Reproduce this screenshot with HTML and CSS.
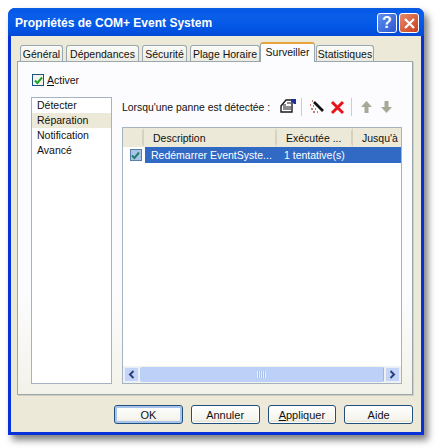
FILE: index.html
```html
<!DOCTYPE html>
<html lang="fr">
<head>
    <meta charset="UTF-8">
    <title>Propriétés de COM+ Event System</title>
    <link rel="stylesheet" href="styles.css">
</head>
<body>
    <div class="window">
        <div class="titlebar">
            <div class="title">Propriétés de COM+ Event System</div>
            <div class="tb-btn help">?</div>
            <div class="tb-btn close">
                <svg width="13" height="13" viewBox="0 0 13 13"><path d="M2 2l9 9M11 2l-9 9" stroke="#fff" stroke-width="2.200" fill="none"/></svg>
            </div>
        </div>
        <div class="body">
            <div class="tabs">
                <div class="tab t1">Général</div>
                <div class="tab t2">Dépendances</div>
                <div class="tab t3">Sécurité</div>
                <div class="tab t4">Plage Horaire</div>
                <div class="tab active t5">Surveiller</div>
                <div class="tab t6">Statistiques</div>
            </div>
            <div class="panel">
                <div class="enable">
                    <div class="check">
                        <svg width="9" height="9" viewBox="0 0 9 9"><path d="M1 4.500l2.400 2.600L8 1.500" stroke="#21a121" stroke-width="2" fill="none"/></svg>
                    </div>
                    <span><u>A</u>ctiver</span>
                </div>
                <div class="columns">
                    <div class="side">
                        <div class="side-item">Détecter</div>
                        <div class="side-item current">Réparation</div>
                        <div class="side-item">Notification</div>
                        <div class="side-item">Avancé</div>
                    </div>
                    <div class="main">
                        <div class="toolbar">
                            <span class="tool-label">Lorsqu'une panne est détectée :</span>
                            <svg class="ico i-props" width="17" height="16" viewBox="0 0 17 16">
                                <path d="M1 8l5-6h6v12H1z" fill="#fff" stroke="#1a1a1a" stroke-width="1.400"/>
                                <path d="M3 7h3M7 5h4M3 9h8M3 11h8" stroke="#1a1a1a" stroke-width="1.200"/>
                                <path d="M11 1h5v5h-2l-3-3z" fill="#1c2f9f"/>
                            </svg>
                            <div class="sep"></div>
                            <svg class="ico i-wand" width="15" height="15" viewBox="0 0 15 15">
                                <path d="M5 2l9 9" stroke="#111" stroke-width="2.600"/>
                                <path d="M3 1h1M1 5h1M4 6h1M2 9h2M6 9h1M4 12h2M8 12h1" stroke="#b5523a" stroke-width="1.400"/>
                            </svg>
                            <svg class="ico i-del" width="15" height="15" viewBox="0 0 15 15">
                                <path d="M2 2l11 11M13 2L2 13" stroke="#e8141c" stroke-width="3"/>
                            </svg>
                            <div class="sep sep2"></div>
                            <svg class="ico i-up" width="13" height="14" viewBox="0 0 13 14">
                                <path d="M6.500 1L12 7H8.500v6h-4V7H1z" fill="#a8a896"/>
                            </svg>
                            <svg class="ico i-down" width="13" height="14" viewBox="0 0 13 14">
                                <path d="M6.500 13L12 7H8.500V1h-4v6H1z" fill="#a8a896"/>
                            </svg>
                        </div>
                        <div class="list">
                            <div class="head">
                                <div class="hcell c0"></div>
                                <div class="hcell c1">Description</div>
                                <div class="hcell c2">Exécutée ...</div>
                                <div class="hcell c3">Jusqu'à</div>
                            </div>
                            <div class="row">
                                <div class="row-check">
                                    <div class="check small">
                                        <svg width="9" height="9" viewBox="0 0 9 9"><path d="M1 4.500l2.400 2.600L8 1.500" stroke="#1f7f6a" stroke-width="2" fill="none"/></svg>
                                    </div>
                                </div>
                                <div class="row-sel">
                                    <div class="cell cell-name">Redémarrer EventSyste...</div>
                                    <div class="cell">1 tentative(s)</div>
                                </div>
                            </div>
                            <div class="list-fill"></div>
                            <div class="hscroll">
                                <div class="sb-btn">
                                    <svg width="7" height="9" viewBox="0 0 7 9"><path d="M5.500 1L2 4.500 5.500 8" stroke="#2c3f78" stroke-width="2" fill="none"/></svg>
                                </div>
                                <div class="sb-thumb">
                                    <div class="grip"></div>
                                </div>
                                <div class="sb-btn">
                                    <svg width="7" height="9" viewBox="0 0 7 9"><path d="M1.500 1L5 4.500 1.500 8" stroke="#2c3f78" stroke-width="2" fill="none"/></svg>
                                </div>
                            </div>
                        </div>
                    </div>
                </div>
            </div>
            <div class="buttons">
                <div class="btn default">OK</div>
                <div class="btn">Annuler</div>
                <div class="btn"><span><u>A</u>ppliquer</span></div>
                <div class="btn">Aide</div>
            </div>
        </div>
    </div>
</body>
</html>
```

FILE: styles.css
```css
* {
    box-sizing: border-box;
}
body {
    margin: 0;
    height: 448px;
    padding: 8px 13px 13px 8px;
    background-color: white;
    font-family: "Liberation Sans", sans-serif;
    font-size: 10.500px;
    color: #111;
    overflow: hidden;
}
.window {
    width: 416px;
    height: 427px;
    display: flex;
    flex-direction: column;
    background-color: #0831d9;
    border-radius: 7px 7px 0 0;
    box-shadow: 4px 5px 7px rgba(0, 0, 0, 0.5);
}
.titlebar {
    height: 28px;
    flex: none;
    display: flex;
    align-items: center;
    padding: 2px 5px 0 7px;
    border-radius: 7px 7px 0 0;
    background: linear-gradient(#0a5fe0 0, #0558e8 3px, #0a5fe8 8px, #0355e5 20px, #0349d6 100%);
}
.title {
    flex: 1;
    color: white;
    font-size: 12px;
    font-weight: bold;
    white-space: nowrap;
}
.tb-btn {
    width: 20px;
    height: 20px;
    margin-left: 2px;
    display: flex;
    justify-content: center;
    align-items: center;
    border: 1px solid white;
    border-radius: 3px;
    color: white;
    font-size: 16px;
    font-weight: bold;
}
.help {
    background: linear-gradient(135deg, #5f8ff0, #2a58d0);
}
.close {
    background: linear-gradient(135deg, #e88a6c, #c8401c);
}
.body {
    flex: 1;
    margin: 0 3px 3px 3px;
    padding: 8px 8px 0 6px;
    background-color: #ece9d8;
}
.tabs {
    height: 17px;
    display: flex;
    align-items: flex-end;
    padding-left: 3px;
}
.tab {
    height: 16px;
    margin-right: 3px;
    display: flex;
    justify-content: center;
    align-items: center;
    white-space: nowrap;
    background: linear-gradient(#fbfbf8, #ecebe0);
    border: 1px solid #9aa7ae;
    border-bottom: none;
    border-radius: 3px 3px 0 0;
}
.t1 { width: 43px; }
.t2 { width: 73px; }
.t3 { width: 45px; }
.t4 { width: 70px; margin-right: 0; }
.t5 { width: 55px; margin-right: 1px; }
.t6 { width: 58px; }
.tab.active {
    height: 20px;
    padding-bottom: 3px;
    margin-bottom: -1px;
    z-index: 1;
    background: #fcfcfe;
    border-top: 2px solid #e8a33c;
}
.panel {
    width: 396px;
    height: 334px;
    padding: 12px 10px 10px 13px;
    background: linear-gradient(#fcfcfe 70%, #f3f2e9);
    border: 1px solid #9aa7ae;
    box-shadow: 1px 1px 0 #d0cdbd;
}
.enable {
    height: 12px;
    display: flex;
    align-items: center;
    gap: 3px;
    padding-left: 1px;
}
.check {
    width: 12px;
    height: 12px;
    flex: none;
    display: flex;
    justify-content: center;
    align-items: center;
    background-color: #f4f4ee;
    border: 1px solid #1c5180;
}
.check.small {
    background-color: #a9c4e8;
    border-color: #5a7ea8;
}
.columns {
    height: 287px;
    margin-top: 11px;
    display: flex;
}
.side {
    width: 81px;
    flex: none;
    background-color: white;
    border: 1px solid #a5b2c0;
}
.side-item {
    height: 15px;
    padding-left: 5px;
    line-height: 15px;
}
.side-item.current {
    background-color: #ece9d8;
}
.main {
    flex: 1;
    min-width: 0;
    margin-left: 10px;
    display: flex;
    flex-direction: column;
}
.toolbar {
    height: 30px;
    flex: none;
    display: flex;
    align-items: center;
    padding-bottom: 10px;
}
.tool-label {
    width: 158px;
    flex: none;
    white-space: nowrap;
    font-size: 10.400px;
}
.i-props {
    margin-bottom: 2px;
}
.sep {
    width: 1px;
    height: 18px;
    margin: 0 7px 0 4px;
    background-color: #cfcdbd;
}
.sep2 {
    margin: 0 8px 0 6px;
}
.i-del {
    margin-left: 6px;
}
.i-down {
    margin-left: 7px;
}
.list {
    width: 280px;
    flex: 1;
    display: flex;
    flex-direction: column;
    background-color: white;
    border: 1px solid #a5b2c0;
}
.head {
    height: 19px;
    flex: none;
    display: flex;
    background-color: #ece9d8;
}
.hcell {
    display: flex;
    align-items: center;
    padding-left: 9px;
    white-space: nowrap;
    overflow: hidden;
    border-right: 2px solid #d5d2c0;
    border-top: 3px solid #ece9d8;
    border-bottom: 3px solid #ece9d8;
}
.c0 { width: 21px; flex: none; }
.c1 { width: 133px; flex: none; }
.c2 { width: 76px; flex: none; }
.c3 { width: 47px; flex: none; border-right: none; }
.row {
    height: 16px;
    flex: none;
    display: flex;
}
.row-check {
    width: 22px;
    flex: none;
    display: flex;
    justify-content: center;
    align-items: center;
    padding-left: 3px;
}
.row-sel {
    flex: 1;
    display: flex;
    align-items: center;
    background-color: #316ac5;
    color: white;
}
.cell {
    padding-left: 6px;
    white-space: nowrap;
}
.cell-name {
    width: 133px;
    flex: none;
}
.list-fill {
    flex: 1;
}
.hscroll {
    height: 17px;
    flex: none;
    display: flex;
    gap: 1px;
    padding: 1px;
    background-color: #f3f3ee;
}
.sb-btn {
    width: 15px;
    flex: none;
    display: flex;
    justify-content: center;
    align-items: center;
    background-color: #c3d4f8;
    border: 1px solid #e8eefc;
    border-radius: 2px;
}
.sb-thumb {
    flex: 1;
    display: flex;
    justify-content: center;
    align-items: center;
    background-color: #bdd0f8;
    border-radius: 2px;
    border-right: 1px solid #9fb4de;
}
.grip {
    width: 9px;
    height: 7px;
    background: repeating-linear-gradient(90deg, #e6edfd 0 1px, #a9bfec 1px 2px);
}
.buttons {
    margin-top: 10px;
    display: flex;
    gap: 8px;
    padding-left: 97px;
}
.btn {
    width: 69px;
    height: 19px;
    display: flex;
    justify-content: center;
    align-items: center;
    font-size: 11px;
    background: linear-gradient(#fff, #f4f3ec 80%, #dcd8c8);
    border: 1px solid #1f4f7c;
    border-radius: 3px;
    box-shadow: inset 0 0 0 1px #fff;
}
.btn.default {
    box-shadow: inset 0 0 0 2px #a9c4ec;
}
```
